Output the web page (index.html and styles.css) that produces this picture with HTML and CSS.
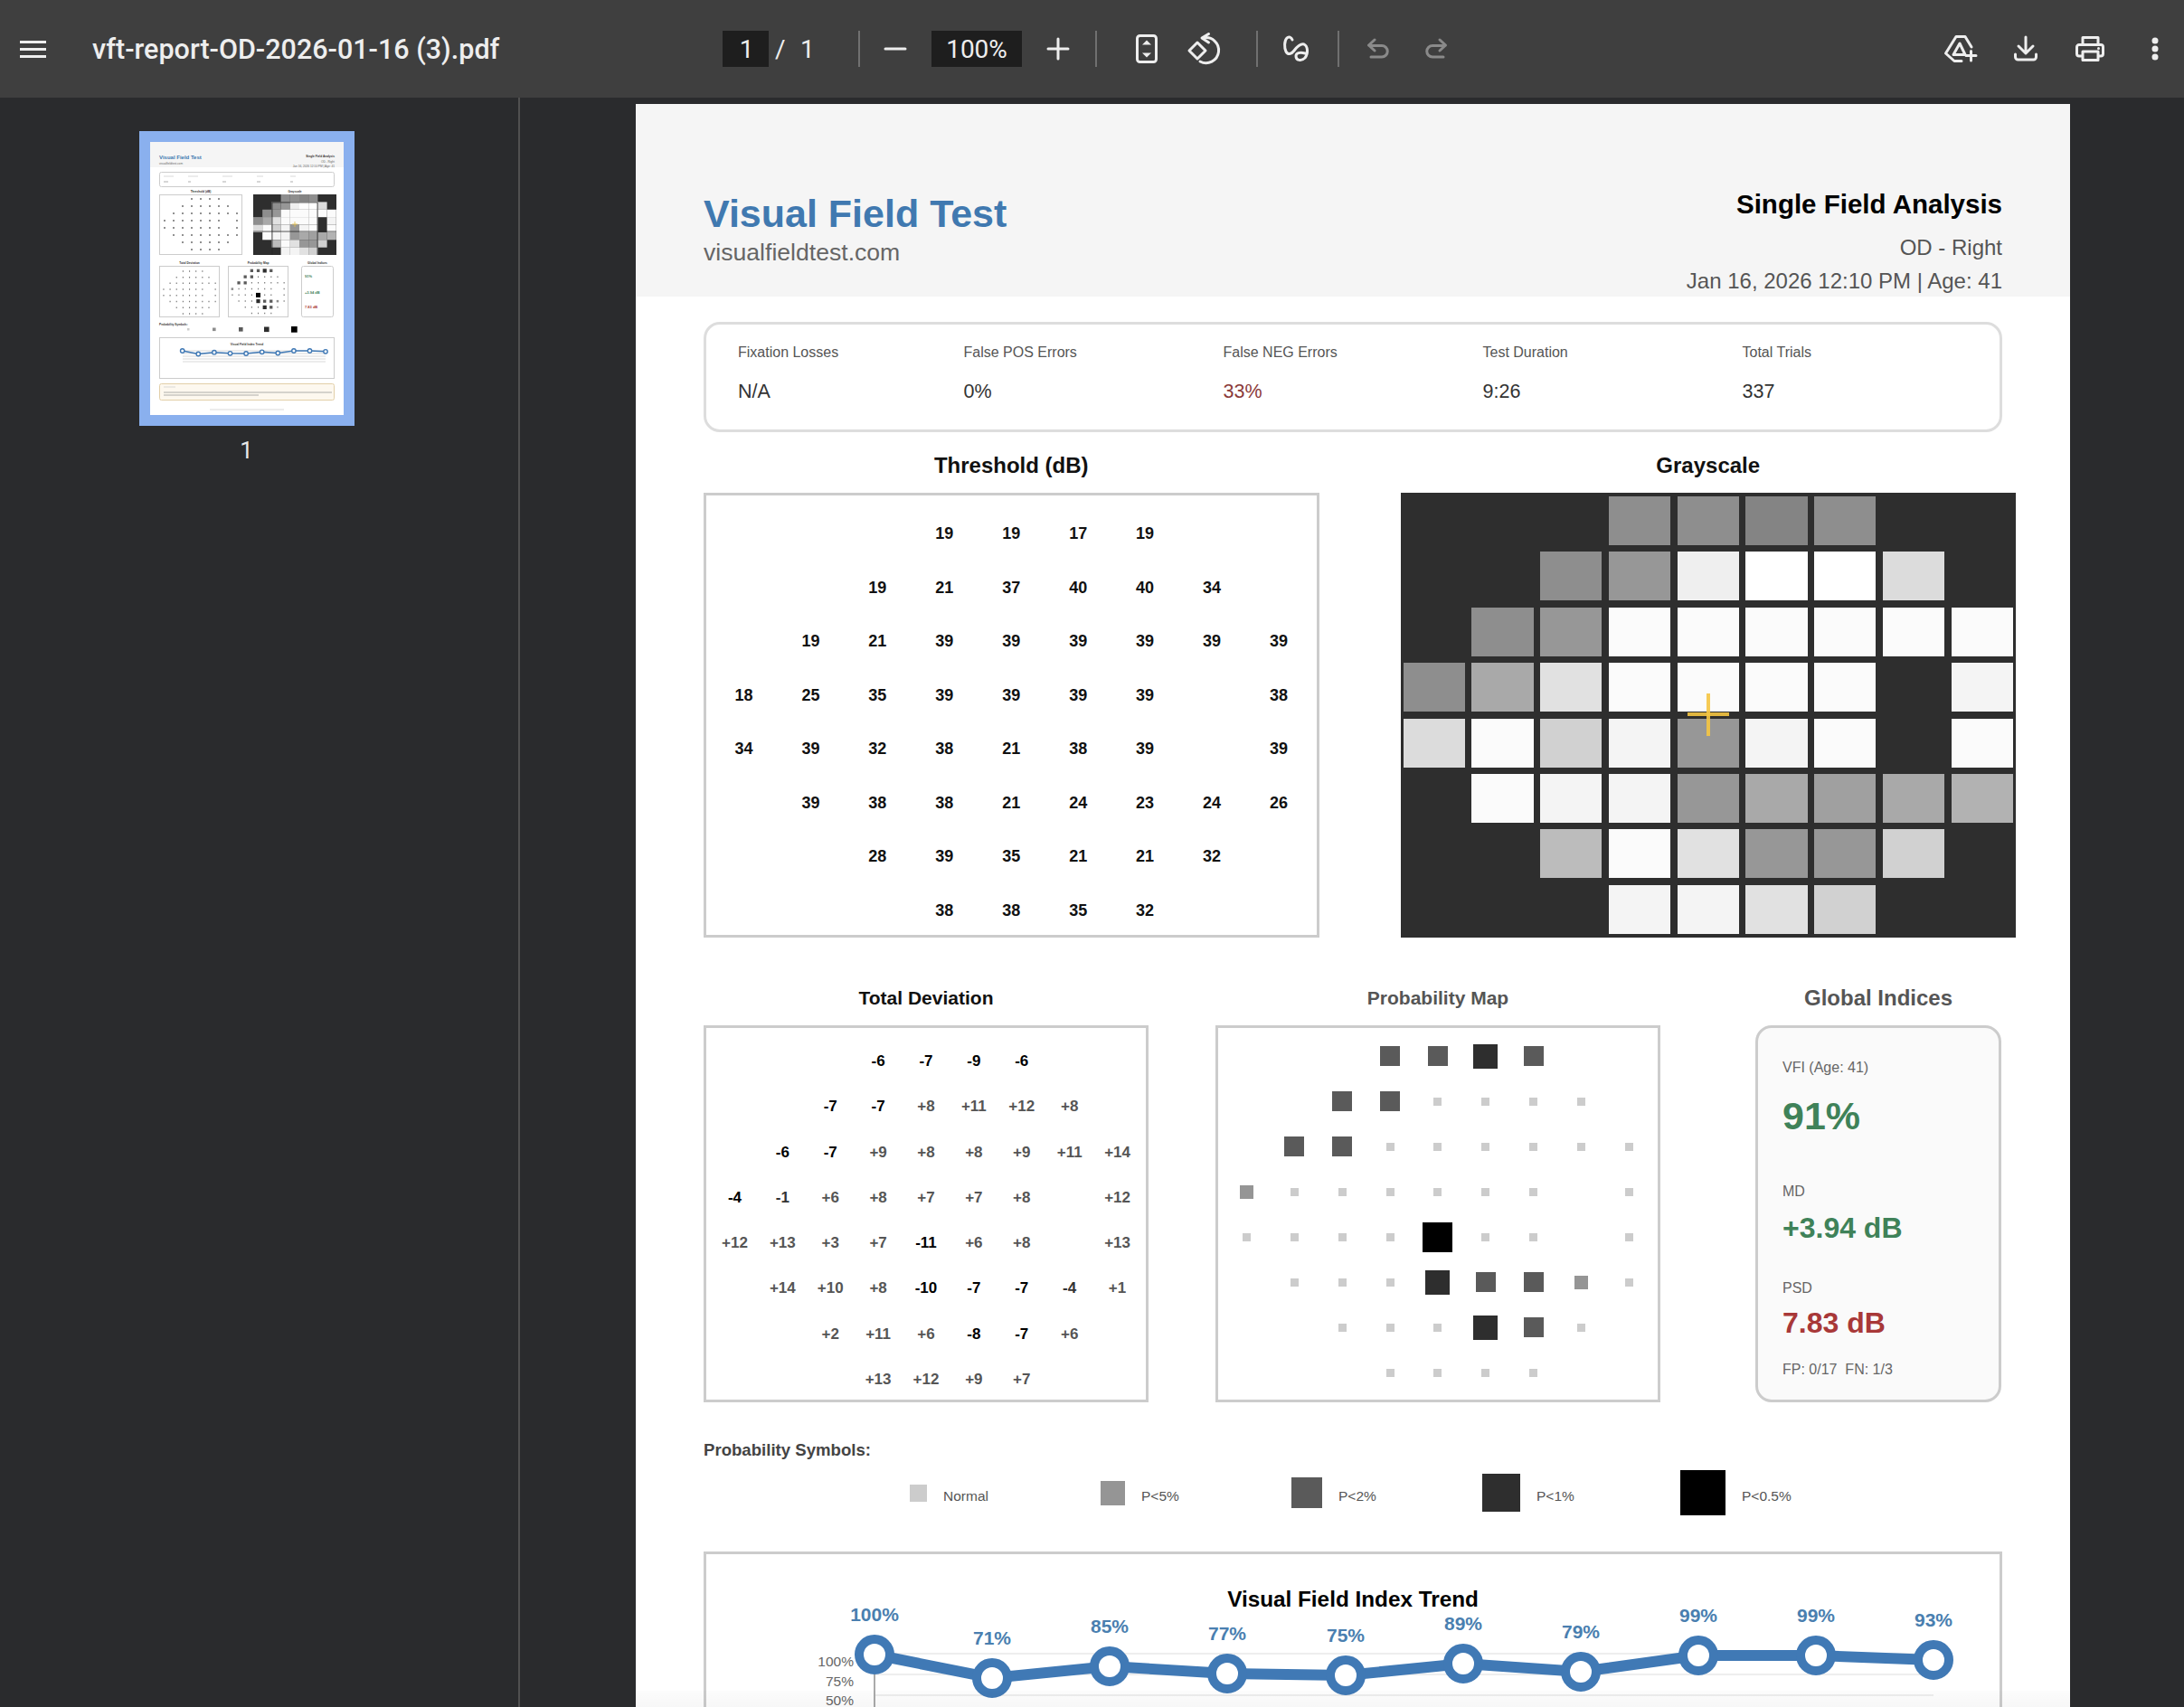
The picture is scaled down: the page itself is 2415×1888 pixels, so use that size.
FILE: index.html
```html
<!DOCTYPE html>
<html lang="en">
<head>
    <meta charset="UTF-8">
    <meta name="viewport" content="width=device-width, initial-scale=1.0">
    <title>vft-report-OD-2026-01-16 (3).pdf</title>
    <link rel="stylesheet" href="styles.css">
</head>
<body>
    <header class="toolbar">
        <svg class="icon ic-menu" width="29" height="19" viewBox="0 0 29 19"><path d="M0 1.5H29M0 9.5H29M0 17.5H29"/></svg>
        <div class="filename">vft-report-OD-2026-01-16 (3).pdf</div>

        <div class="num-box page-box">1</div>
        <span class="slash">/</span>
        <span class="total">1</span>
        <div class="sep sep-a"></div>
        <svg class="icon ic-minus" width="24" height="24" viewBox="0 0 24 24"><path d="M1 12H23"/></svg>
        <div class="num-box zoom-box">100%</div>
        <svg class="icon ic-plus" width="24" height="24" viewBox="0 0 24 24"><path d="M1 12H23M12 1V23"/></svg>
        <div class="sep sep-b"></div>
        <svg class="icon ic-fit" width="24" height="32" viewBox="0 0 24 32"><rect x="1.5" y="1.5" width="21" height="29" rx="3"/><path class="solid" d="M7 11.5H17L12 6.5ZM7 20.5H17L12 25.5Z"/></svg>
        <svg class="icon ic-rotate" width="36" height="34" viewBox="0 0 36 34"><path d="M10 10L19 19L10 28L1 19Z"/><path d="M16.5 5A14 14 0 1 1 13 31M22.5 0.5L15 5L22.5 10"/></svg>
        <div class="sep sep-c"></div>
        <svg class="icon ic-draw" width="30" height="28" viewBox="0 0 30 28"><path d="M10 4C9 1 6 0 4 2C1 5 1 13 3 17C5 21 9 20 12 16C15 12 19 8 23 9C27 11 28 19 24 24C20 28 14 27 14 22C14 19 18 17 24 19"/></svg>
        <div class="sep sep-d"></div>
        <svg class="icon off ic-undo" width="24" height="22" viewBox="0 0 24 22"><path d="M8 1L1.5 7L8 13M2 7.5H16A6 6 0 0 1 16 20H4"/></svg>
        <svg class="icon off ic-redo" width="24" height="22" viewBox="0 0 24 22"><path d="M16 1L22.5 7L16 13M22 7.5H8A6 6 0 0 0 8 20H20"/></svg>

        <svg class="icon ic-drive" width="36" height="30" viewBox="0 0 36 30"><path d="M19 28.5H11L1.5 20L13 1.5H23L30 13M17 9L10 21.5H23Z"/><path d="M29.5 17.5V28M24 22.5H35"/></svg>
        <svg class="icon ic-download" width="26" height="28" viewBox="0 0 26 28"><path d="M13 1V18M5 11L13 19L21 11M1.5 20V23A3 3 0 0 0 4.5 26H21.5A3 3 0 0 0 24.5 23V20"/></svg>
        <svg class="icon ic-print" width="32" height="28" viewBox="0 0 32 28"><path d="M8 9V1.5H25V9M8 22H4A2.5 2.5 0 0 1 1.5 19.5V12A2.5 2.5 0 0 1 4 9.5H28A2.5 2.5 0 0 1 30.5 12V19.5A2.5 2.5 0 0 1 28 22H25M8 17H25V26.5H8Z"/><circle class="solid" cx="25.5" cy="13.5" r="1.5"/></svg>
        <svg class="icon ic-more" width="8" height="26" viewBox="0 0 8 26"><circle class="solid" cx="4" cy="4" r="3.5"/><circle class="solid" cx="4" cy="13" r="3.5"/><circle class="solid" cx="4" cy="22" r="3.5"/></svg>
    </header>

    <div class="main">
        <aside class="sidebar">
            <div class="thumb">
                <svg class="thumb-page" width="214" height="302" viewBox="0 0 214 302">
                    <rect class="t-head" width="214" height="28"/>
                    <text class="t-title" x="10" y="19">Visual Field Test</text>
                    <text class="t-small" x="10" y="24.5">visualfieldtest.com</text>
                    <text class="t-bold end" x="204" y="17">Single Field Analysis</text>
                    <text class="t-small end" x="204" y="22.5">OD - Right</text>
                    <text class="t-small end" x="204" y="27.5">Jan 16, 2026 12:10 PM | Age: 41</text>

                    <rect class="t-box round" x="10.5" y="33.5" width="193" height="16" rx="2"/>
                    <path class="t-faint" d="M15 38H26M42 38H53M80 38H91M118 38H125M155 38H161"/>
                    <path class="t-mid" d="M15 44H20M42 44H45M80 44H84M118 44H122M155 44H158"/>

                    <text class="t-bold mid" x="56" y="55.5">Threshold (dB)</text>
                    <text class="t-bold mid" x="160" y="55.5">Grayscale</text>
                    <rect class="t-box" x="10.5" y="58.5" width="91" height="66"/>
                    <g id="thumb-dots" class="t-dots">
                        <path d="M45.2 63H76.8M35.2 71H86.8M25.2 79H96.8M15.2 87H76.8M95.2 87H96.8M15.2 95H76.8M95.2 95H96.8M25.2 103H96.8M35.2 111H86.8M45.2 119H76.8"/>
                    </g>

                    <rect class="g2e" x="114" y="58" width="92" height="67"/>
                    <g class="t-cells">
                        <rect class="g8e" x="144.6" y="58"/><rect class="g8e" x="154.8" y="58"/><rect class="g84" x="165" y="58"/><rect class="g8e" x="175.2" y="58"/>
                        <rect class="g8e" x="134.4" y="66.4"/><rect class="g97" x="144.6" y="66.4"/><rect class="gef" x="154.8" y="66.4"/><rect class="gff" x="165" y="66.4"/><rect class="gff" x="175.2" y="66.4"/><rect class="gdc" x="185.4" y="66.4"/>
                        <rect class="g8e" x="124.2" y="74.8"/><rect class="g97" x="134.4" y="74.8"/><rect class="gfb" x="144.6" y="74.8"/><rect class="gfb" x="154.8" y="74.8"/><rect class="gfb" x="165" y="74.8"/><rect class="gfb" x="175.2" y="74.8"/><rect class="gfb" x="185.4" y="74.8"/><rect class="gfb" x="195.6" y="74.8"/>
                        <rect class="g8e" x="114" y="83.1"/><rect class="ga9" x="124.2" y="83.1"/><rect class="ge1" x="134.4" y="83.1"/><rect class="gfb" x="144.6" y="83.1"/><rect class="gfb" x="154.8" y="83.1"/><rect class="gfb" x="165" y="83.1"/><rect class="gfb" x="175.2" y="83.1"/><rect class="gf4" x="195.6" y="83.1"/>
                        <rect class="gdc" x="114" y="91.5"/><rect class="gfb" x="124.2" y="91.5"/><rect class="gd1" x="134.4" y="91.5"/><rect class="gf4" x="144.6" y="91.5"/><rect class="g97" x="154.8" y="91.5"/><rect class="gf4" x="165" y="91.5"/><rect class="gfb" x="175.2" y="91.5"/><rect class="gfb" x="195.6" y="91.5"/>
                        <rect class="gfb" x="124.2" y="99.9"/><rect class="gf4" x="134.4" y="99.9"/><rect class="gf4" x="144.6" y="99.9"/><rect class="g97" x="154.8" y="99.9"/><rect class="ga9" x="165" y="99.9"/><rect class="ga0" x="175.2" y="99.9"/><rect class="ga9" x="185.4" y="99.9"/><rect class="gb2" x="195.6" y="99.9"/>
                        <rect class="gbc" x="134.4" y="108.3"/><rect class="gfb" x="144.6" y="108.3"/><rect class="ge1" x="154.8" y="108.3"/><rect class="g97" x="165" y="108.3"/><rect class="g97" x="175.2" y="108.3"/><rect class="gd1" x="185.4" y="108.3"/>
                        <rect class="gf4" x="144.6" y="116.6"/><rect class="gf4" x="154.8" y="116.6"/><rect class="ge1" x="165" y="116.6"/><rect class="gd1" x="175.2" y="116.6"/>
                    </g>
                    <path class="t-seam" d="M135 67H185M114 99H206M135 67V125M185 67V125"/>
                    <path class="t-cross" d="M157 91H163M160 88V94"/>

                    <text class="t-bold mid" x="43.5" y="134.5">Total Deviation</text>
                    <text class="t-bold mid" x="119.5" y="134.5">Probability Map</text>
                    <text class="t-bold mid" x="185" y="134.5">Global Indices</text>
                    <rect class="t-box" x="10.5" y="137.5" width="66" height="56"/>
                    <rect class="t-box" x="86.5" y="137.5" width="66" height="56"/>
                    <rect class="t-box round" x="167.5" y="137.5" width="35" height="56" rx="2"/>
                    <use href="#thumb-dots" transform="translate(3.5 90) scale(.715 .84)"/>
                    <use href="#thumb-dots" transform="translate(79.5 89.5) scale(.715 .84)"/>
                    <g class="t-syms">
                        <rect class="g5a" x="110.7" y="140.7" width="3.3" height="3.3"/><rect class="g5a" x="117.9" y="140.7" width="3.3" height="3.3"/><rect class="g2e" x="124.6" y="140.3" width="4.2" height="4.2"/><rect class="g5a" x="132.1" y="140.7" width="3.3" height="3.3"/>
                        <rect class="g5a" x="103.5" y="147.5" width="3.3" height="3.3"/><rect class="g5a" x="110.7" y="147.5" width="3.3" height="3.3"/>
                        <rect class="g5a" x="96.4" y="154.2" width="3.3" height="3.3"/><rect class="g5a" x="103.5" y="154.2" width="3.3" height="3.3"/>
                        <rect class="g8e" x="89.6" y="161.4" width="2.5" height="2.5"/>
                        <rect class="g00" x="117" y="166.9" width="5" height="5"/>
                        <rect class="g2e" x="117.4" y="174" width="4.2" height="4.2"/><rect class="g5a" x="125" y="174.5" width="3.3" height="3.3"/><rect class="g5a" x="132.1" y="174.5" width="3.3" height="3.3"/><rect class="g8e" x="139.7" y="174.9" width="2.5" height="2.5"/>
                        <rect class="g2e" x="124.6" y="180.8" width="4.2" height="4.2"/><rect class="g5a" x="132.1" y="181.2" width="3.3" height="3.3"/>
                    </g>
                    <text class="t-teal" x="171" y="150">91%</text>
                    <text class="t-teal" x="171" y="168">+3.94 dB</text>
                    <text class="t-red" x="171" y="184">7.83 dB</text>

                    <text class="t-bold" x="10" y="202.5">Probability Symbols:</text>
                    <rect class="gcc" x="41" y="206" width="2.5" height="2.5"/>
                    <rect class="g8e" x="69" y="205.5" width="3.6" height="3.6"/>
                    <rect class="g5a" x="98" y="205" width="4.6" height="4.6"/>
                    <rect class="g2e" x="126" y="204.5" width="5.6" height="5.6"/>
                    <rect class="g00" x="156" y="204" width="6.7" height="6.7"/>

                    <rect class="t-box" x="10.5" y="216.5" width="193" height="45"/>
                    <text class="t-bold mid" x="107" y="225">Visual Field Index Trend</text>
                    <path class="t-faint" d="M36 231H194M36 234H194M36 237H194M36 240H194M36 243H194"/>
                    <path class="t-blue" d="M35.7 231L53.3 234.5L70.9 232.7L88.5 233.8L106.1 234L123.7 232.3L141.3 233.5L158.9 231L176.5 231L194 231.8"/>
                    <g class="t-rings">
                        <circle cx="35.7" cy="231" r="2.2"/><circle cx="53.3" cy="234.5" r="2.2"/><circle cx="70.9" cy="232.7" r="2.2"/><circle cx="88.5" cy="233.8" r="2.2"/><circle cx="106.1" cy="234" r="2.2"/><circle cx="123.7" cy="232.3" r="2.2"/><circle cx="141.3" cy="233.5" r="2.2"/><circle cx="158.9" cy="231" r="2.2"/><circle cx="176.5" cy="231" r="2.2"/><circle cx="194" cy="231.8" r="2.2"/>
                    </g>

                    <rect class="t-note" x="10.5" y="267.5" width="193" height="18" rx="2"/>
                    <path class="t-faint" d="M15 271H28"/>
                    <path class="t-mid" d="M15 277H201M15 280H120"/>
                    <path class="t-faint" d="M66 296H148"/>
                </svg>
            </div>
            <div class="thumb-num">1</div>
        </aside>

        <main class="viewer">
            <div class="page">
                <div class="report-head">
                    <div class="brand">
                        <h1>Visual Field Test</h1>
                        <div class="domain">visualfieldtest.com</div>
                    </div>
                    <div class="meta">
                        <h2>Single Field Analysis</h2>
                        <div class="eye">OD - Right</div>
                        <div class="date">Jan 16, 2026 12:10 PM | Age: 41</div>
                    </div>
                </div>

                <div class="report-body">
                    <div class="stats">
                        <div><div class="stat-label">Fixation Losses</div><div class="stat-value">N/A</div></div>
                        <div><div class="stat-label">False POS Errors</div><div class="stat-value">0%</div></div>
                        <div><div class="stat-label">False NEG Errors</div><div class="stat-value bad">33%</div></div>
                        <div><div class="stat-label">Test Duration</div><div class="stat-value">9:26</div></div>
                        <div><div class="stat-label">Total Trials</div><div class="stat-value">337</div></div>
                    </div>

                    <div class="row-top">
                        <section class="col">
                            <h3 class="sec-title">Threshold (dB)</h3>
                            <div class="plot threshold">
                                <span></span><span></span><span></span><span>19</span><span>19</span><span>17</span><span>19</span><span></span><span></span>
                                <span></span><span></span><span>19</span><span>21</span><span>37</span><span>40</span><span>40</span><span>34</span><span></span>
                                <span></span><span>19</span><span>21</span><span>39</span><span>39</span><span>39</span><span>39</span><span>39</span><span>39</span>
                                <span>18</span><span>25</span><span>35</span><span>39</span><span>39</span><span>39</span><span>39</span><span></span><span>38</span>
                                <span>34</span><span>39</span><span>32</span><span>38</span><span>21</span><span>38</span><span>39</span><span></span><span>39</span>
                                <span></span><span>39</span><span>38</span><span>38</span><span>21</span><span>24</span><span>23</span><span>24</span><span>26</span>
                                <span></span><span></span><span>28</span><span>39</span><span>35</span><span>21</span><span>21</span><span>32</span><span></span>
                                <span></span><span></span><span></span><span>38</span><span>38</span><span>35</span><span>32</span><span></span><span></span>
                            </div>
                        </section>
                        <section class="col">
                            <h3 class="sec-title">Grayscale</h3>
                            <div class="grayscale">
                                <i></i><i></i><i></i><i class="g8e"></i><i class="g8e"></i><i class="g84"></i><i class="g8e"></i><i></i><i></i>
                                <i></i><i></i><i class="g8e"></i><i class="g97"></i><i class="gef"></i><i class="gff"></i><i class="gff"></i><i class="gdc"></i><i></i>
                                <i></i><i class="g8e"></i><i class="g97"></i><i class="gfb"></i><i class="gfb"></i><i class="gfb"></i><i class="gfb"></i><i class="gfb"></i><i class="gfb"></i>
                                <i class="g8e"></i><i class="ga9"></i><i class="ge1"></i><i class="gfb"></i><i class="gfb"></i><i class="gfb"></i><i class="gfb"></i><i></i><i class="gf4"></i>
                                <i class="gdc"></i><i class="gfb"></i><i class="gd1"></i><i class="gf4"></i><i class="g97"></i><i class="gf4"></i><i class="gfb"></i><i></i><i class="gfb"></i>
                                <i></i><i class="gfb"></i><i class="gf4"></i><i class="gf4"></i><i class="g97"></i><i class="ga9"></i><i class="ga0"></i><i class="ga9"></i><i class="gb2"></i>
                                <i></i><i></i><i class="gbc"></i><i class="gfb"></i><i class="ge1"></i><i class="g97"></i><i class="g97"></i><i class="gd1"></i><i></i>
                                <i></i><i></i><i></i><i class="gf4"></i><i class="gf4"></i><i class="ge1"></i><i class="gd1"></i><i></i><i></i>
                                <div class="fix-h"></div>
                                <div class="fix-v"></div>
                            </div>
                        </section>
                    </div>

                    <div class="row-mid">
                        <section class="col-dev">
                            <h3 class="sec-title small">Total Deviation</h3>
                            <div class="plot deviation">
                                <span></span><span></span><span></span><span class="neg">-6</span><span class="neg">-7</span><span class="neg">-9</span><span class="neg">-6</span><span></span><span></span>
                                <span></span><span></span><span class="neg">-7</span><span class="neg">-7</span><span>+8</span><span>+11</span><span>+12</span><span>+8</span><span></span>
                                <span></span><span class="neg">-6</span><span class="neg">-7</span><span>+9</span><span>+8</span><span>+8</span><span>+9</span><span>+11</span><span>+14</span>
                                <span class="neg">-4</span><span class="mild">-1</span><span>+6</span><span>+8</span><span>+7</span><span>+7</span><span>+8</span><span></span><span>+12</span>
                                <span>+12</span><span>+13</span><span>+3</span><span>+7</span><span class="neg">-11</span><span>+6</span><span>+8</span><span></span><span>+13</span>
                                <span></span><span>+14</span><span>+10</span><span>+8</span><span class="neg">-10</span><span class="neg">-7</span><span class="neg">-7</span><span class="mild">-4</span><span>+1</span>
                                <span></span><span></span><span>+2</span><span>+11</span><span>+6</span><span class="neg">-8</span><span class="neg">-7</span><span>+6</span><span></span>
                                <span></span><span></span><span></span><span>+13</span><span>+12</span><span>+9</span><span>+7</span><span></span><span></span>
                            </div>
                        </section>
                        <section class="col-dev">
                            <h3 class="sec-title small soft">Probability Map</h3>
                            <div class="plot probmap">
                                <span></span><span></span><span></span><span><i class="sym p2"></i></span><span><i class="sym p2"></i></span><span><i class="sym p1"></i></span><span><i class="sym p2"></i></span><span></span><span></span>
                                <span></span><span></span><span><i class="sym p2"></i></span><span><i class="sym p2"></i></span><span><i class="sym pn"></i></span><span><i class="sym pn"></i></span><span><i class="sym pn"></i></span><span><i class="sym pn"></i></span><span></span>
                                <span></span><span><i class="sym p2"></i></span><span><i class="sym p2"></i></span><span><i class="sym pn"></i></span><span><i class="sym pn"></i></span><span><i class="sym pn"></i></span><span><i class="sym pn"></i></span><span><i class="sym pn"></i></span><span><i class="sym pn"></i></span>
                                <span><i class="sym p5"></i></span><span><i class="sym pn"></i></span><span><i class="sym pn"></i></span><span><i class="sym pn"></i></span><span><i class="sym pn"></i></span><span><i class="sym pn"></i></span><span><i class="sym pn"></i></span><span></span><span><i class="sym pn"></i></span>
                                <span><i class="sym pn"></i></span><span><i class="sym pn"></i></span><span><i class="sym pn"></i></span><span><i class="sym pn"></i></span><span><i class="sym p05"></i></span><span><i class="sym pn"></i></span><span><i class="sym pn"></i></span><span></span><span><i class="sym pn"></i></span>
                                <span></span><span><i class="sym pn"></i></span><span><i class="sym pn"></i></span><span><i class="sym pn"></i></span><span><i class="sym p1"></i></span><span><i class="sym p2"></i></span><span><i class="sym p2"></i></span><span><i class="sym p5"></i></span><span><i class="sym pn"></i></span>
                                <span></span><span></span><span><i class="sym pn"></i></span><span><i class="sym pn"></i></span><span><i class="sym pn"></i></span><span><i class="sym p1"></i></span><span><i class="sym p2"></i></span><span><i class="sym pn"></i></span><span></span>
                                <span></span><span></span><span></span><span><i class="sym pn"></i></span><span><i class="sym pn"></i></span><span><i class="sym pn"></i></span><span><i class="sym pn"></i></span><span></span><span></span>
                            </div>
                        </section>
                        <section class="col-global">
                            <h3 class="sec-title soft">Global Indices</h3>
                            <div class="indices">
                                <div class="idx-label">VFI (Age: 41)</div>
                                <div class="idx-big good">91%</div>
                                <div class="idx-label md">MD</div>
                                <div class="idx-val good">+3.94 dB</div>
                                <div class="idx-label psd">PSD</div>
                                <div class="idx-val red">7.83 dB</div>
                                <div class="idx-label fp">FP: 0/17&nbsp; FN: 1/3</div>
                            </div>
                        </section>
                    </div>

                    <div class="legend-title">Probability Symbols:</div>
                    <div class="legend">
                        <div class="legend-item"><i class="sw sw-n"></i><span>Normal</span></div>
                        <div class="legend-item"><i class="sw sw-5"></i><span>P&lt;5%</span></div>
                        <div class="legend-item"><i class="sw sw-2"></i><span>P&lt;2%</span></div>
                        <div class="legend-item wide"><i class="sw sw-1"></i><span>P&lt;1%</span></div>
                        <div class="legend-item"><i class="sw sw-05"></i><span>P&lt;0.5%</span></div>
                    </div>

                    <div class="trend">
                        <svg class="trend-chart" width="1429" height="400" viewBox="0 0 1429 400">
                            <text class="trend-title" x="715" y="58">Visual Field Index Trend</text>
                            <path class="grid-line" d="M186 110H1357M186 133H1357M186 156H1357"/>
                            <path class="axis-line" d="M186 111V400"/>
                            <text class="tick" x="163" y="124">100%</text>
                            <text class="tick" x="163" y="146">75%</text>
                            <text class="tick" x="163" y="167">50%</text>
                            <polyline class="trend-line" points="186,111 316,137 446,124 576,132 707,134 837,121 967,130 1097,112 1227,112 1357,117"/>
                            <g class="trend-dots">
                                <circle cx="186" cy="111" r="17"/><circle cx="316" cy="137" r="17"/><circle cx="446" cy="124" r="17"/><circle cx="576" cy="132" r="17"/><circle cx="707" cy="134" r="17"/><circle cx="837" cy="121" r="17"/><circle cx="967" cy="130" r="17"/><circle cx="1097" cy="112" r="17"/><circle cx="1227" cy="112" r="17"/><circle cx="1357" cy="117" r="17"/>
                            </g>
                            <g class="trend-vals">
                                <text x="186" y="74">100%</text><text x="316" y="100">71%</text><text x="446" y="87">85%</text><text x="576" y="95">77%</text><text x="707" y="97">75%</text><text x="837" y="84">89%</text><text x="967" y="93">79%</text><text x="1097" y="75">99%</text><text x="1227" y="75">99%</text><text x="1357" y="80">93%</text>
                            </g>
                        </svg>
                    </div>
                </div>
            </div>
            <div class="page-fade"></div>
        </main>
    </div>
</body>
</html>
```

FILE: styles.css
```css
* {
    box-sizing: border-box;
}

html, body {
    height: 100%;
}

body {
    margin: 0;
    display: flex;
    flex-direction: column;
    overflow: hidden;
    font-family: "Liberation Sans", Arial, sans-serif;
    background: #2a2b2d;
}

/* top bar of the pdf viewer */
.toolbar {
    flex: 0 0 108px;
    display: flex;
    align-items: center;
    padding: 0 28px 0 22px;
    background: #3f3f3f;
    color: #eeeeee;
    font-family: Roboto, "Liberation Sans", sans-serif;
}

.icon {
    flex: none;
    overflow: visible;
    fill: none;
    stroke: #eeeeee;
    stroke-width: 3;
    stroke-linecap: round;
    stroke-linejoin: round;
}

.icon .solid {
    fill: #eeeeee;
    stroke: none;
}

.icon.off {
    stroke: #8a8a8a;
}

.ic-menu { stroke-linecap: butt; }

.filename {
    flex: 0 0 697px;
    margin-left: 51px;
    font-size: 30.5px;
    font-weight: 500;
    white-space: nowrap;
}

.num-box {
    height: 40px;
    display: flex;
    align-items: center;
    justify-content: center;
    background: #1e1e1e;
    font-size: 28px;
}

.page-box { width: 51px; padding-left: 2px; }
.zoom-box { width: 100px; margin-left: 28px; }

.slash { margin-left: 7px; width: 8px; font-size: 28px; }
.total { margin-left: 20px; width: 12px; font-size: 28px; }

.sep {
    flex: none;
    width: 2px;
    height: 40px;
    background: #707070;
}

.sep-a { margin-left: 52px; }
.sep-b { margin-left: 29px; }
.sep-c { margin-left: 39px; }
.sep-d { margin-left: 30px; }

.ic-minus { margin-left: 27px; }
.ic-plus { margin-left: 28px; }
.ic-fit { margin-left: 43px; }
.ic-rotate { margin-left: 34px; }
.ic-draw { margin-left: 28px; }
.ic-undo { margin-left: 31px; }
.ic-redo { margin-left: 40px; }
.ic-drive { margin-left: auto; }
.ic-download { margin-left: 41px; }
.ic-print { margin-left: 42px; }
.ic-more { margin-left: 52px; }

.main {
    flex: 1;
    min-height: 0;
    display: flex;
}

/* thumbnails */
.sidebar {
    flex: 0 0 575px;
    display: flex;
    flex-direction: column;
    align-items: center;
    padding: 37px 28px 0 0;
    border-right: 2px solid #505050;
}

.thumb {
    padding: 12px;
    background: #8ab0ee;
}

.thumb-page {
    display: block;
    background: #ffffff;
}

.thumb-num {
    margin-top: 12px;
    font-family: Roboto, sans-serif;
    font-size: 26px;
    line-height: 30px;
    color: #e8e8e8;
}

.t-head { fill: #f5f5f5; }
.t-title { font-size: 6px; font-weight: bold; fill: #4079b0; }
.t-small { font-size: 3.2px; fill: #666666; }
.t-bold { font-size: 3.2px; font-weight: bold; fill: #333333; }
.t-teal { font-size: 4px; font-weight: bold; fill: #3f8259; }
.t-red { font-size: 4px; font-weight: bold; fill: #a83838; }
.end { text-anchor: end; }
.mid { text-anchor: middle; }
.t-box { fill: #ffffff; stroke: #cccccc; stroke-width: 1; }
.t-faint { fill: none; stroke: #cfcfcf; stroke-width: .8; }
.t-mid { fill: none; stroke: #999999; stroke-width: .8; }
.t-dots path {
    fill: none;
    stroke: #777777;
    stroke-width: 1.8;
    stroke-dasharray: 1.6 8.4;
}
.t-cells rect { width: 10.2px; height: 8.4px; }
.t-seam { fill: none; stroke: #222222; stroke-width: .7; }
.t-cross { fill: none; stroke: #e6c04a; stroke-width: .8; }
.t-blue { fill: none; stroke: #4079b5; stroke-width: 1.4; }
.t-rings circle { fill: #ffffff; stroke: #4079b5; stroke-width: 1.4; }
.t-note { fill: #fdf8ef; stroke: #e2cfa8; stroke-width: 1; }

/* shades shared by the grayscale plot and its thumbnail */
.g00 { background: #000000; fill: #000000; }
.g2e { background: #2e2e2e; fill: #2e2e2e; }
.g5a { background: #5a5a5a; fill: #5a5a5a; }
.g84 { background: #848484; fill: #848484; }
.g8e { background: #8e8e8e; fill: #8e8e8e; }
.g97 { background: #979797; fill: #979797; }
.ga0 { background: #a0a0a0; fill: #a0a0a0; }
.ga9 { background: #a9a9a9; fill: #a9a9a9; }
.gb2 { background: #b2b2b2; fill: #b2b2b2; }
.gbc { background: #bcbcbc; fill: #bcbcbc; }
.gcc { background: #cccccc; fill: #cccccc; }
.gd1 { background: #d1d1d1; fill: #d1d1d1; }
.gdc { background: #dcdcdc; fill: #dcdcdc; }
.ge1 { background: #e1e1e1; fill: #e1e1e1; }
.gef { background: #efefef; fill: #efefef; }
.gf4 { background: #f4f4f4; fill: #f4f4f4; }
.gfb { background: #fbfbfb; fill: #fbfbfb; }
.gff { background: #ffffff; fill: #ffffff; }

/* pdf page */
.viewer {
    flex: 1;
    min-width: 0;
    position: relative;
    overflow: hidden;
    padding-top: 7px;
}

.page {
    width: 1586px;
    margin-left: 128px;
    background: #ffffff;
}

.page-fade {
    position: absolute;
    left: 128px;
    bottom: 0;
    width: 1586px;
    height: 18px;
    background: linear-gradient(rgba(0, 0, 0, 0.01), rgba(0, 0, 0, 0.03));
}

.report-head {
    height: 213px;
    display: flex;
    justify-content: space-between;
    align-items: flex-start;
    padding: 90px 75px 0 75px;
    background: #f5f5f5;
}

.brand { margin-top: 5px; }

.brand h1 {
    margin: 0;
    font-size: 43px;
    line-height: 52px;
    color: #4079b0;
}

.domain {
    font-size: 26.6px;
    line-height: 35px;
    color: #666666;
}

.meta { text-align: right; }

.meta h2 {
    margin: 0;
    font-size: 29.5px;
    line-height: 41px;
    color: #000000;
}

.eye {
    margin-top: 10px;
    font-size: 24px;
    line-height: 36px;
    color: #555555;
}

.date {
    font-size: 24px;
    line-height: 38px;
    color: #555555;
}

.report-body {
    padding: 28px 75px 0 75px;
}

.stats {
    height: 122px;
    display: grid;
    grid-template-columns: 249.5px 287px 287px 287px 1fr;
    padding: 20px 0 0 35px;
    border: 3px solid #dddddd;
    border-radius: 18px;
}

.stat-label {
    font-size: 16px;
    line-height: 22px;
    color: #555555;
}

.stat-value {
    margin-top: 17px;
    font-size: 21.5px;
    line-height: 30px;
    color: #333333;
}

.stat-value.bad { color: #8b3a3a; }

.row-top {
    display: flex;
    gap: 90px;
    margin: 21px -15px 0 0;
}

.col {
    flex: 1;
    min-width: 0;
}

.sec-title {
    margin: 0 0 14px;
    font-size: 24px;
    line-height: 32px;
    text-align: center;
    color: #111111;
}

.sec-title.small { font-size: 21px; }
.sec-title.soft { color: #555555; }

.plot {
    display: grid;
    grid-template-columns: repeat(9, 1fr);
    border: 3px solid #cccccc;
    font-weight: bold;
}

.plot span {
    display: flex;
    align-items: center;
    justify-content: center;
}

.threshold {
    height: 492px;
    grid-auto-rows: 59.5px;
    padding: 13px 4.5px 0;
    font-size: 18px;
    color: #111111;
}

.grayscale {
    position: relative;
    height: 492px;
    display: grid;
    grid-template-columns: repeat(9, 1fr);
    grid-auto-rows: 54px;
    gap: 7.4px;
    padding: 4px 3px;
    background: #2e2e2e;
}

/* fixation cross sits over the cells */
.fix-h, .fix-v {
    position: absolute;
    background: #f5c542;
    opacity: 0.9;
}

.fix-h {
    left: 317px;
    top: 243px;
    width: 46px;
    height: 4px;
}

.fix-v {
    left: 338px;
    top: 222px;
    width: 4px;
    height: 47px;
}

.row-mid {
    display: flex;
    margin-top: 51px;
}

.col-dev {
    flex: 0 0 492px;
    margin-right: 74px;
}

.col-global {
    flex: 0 0 272px;
    margin-left: 31px;
}

.deviation, .probmap {
    height: 417px;
    padding: 12px 5px 0;
}

.deviation {
    grid-auto-rows: 50.25px;
    font-size: 17px;
    color: #555555;
}

.probmap {
    grid-auto-rows: 50px;
    padding-top: 6px;
}

.deviation .neg { color: #000000; }
.deviation .mild { color: #333333; }

.sym { display: block; }
.pn { width: 9px; height: 9px; background: #cccccc; }
.p5 { width: 15px; height: 15px; background: #959595; }
.p2 { width: 22px; height: 22px; background: #5a5a5a; }
.p1 { width: 27px; height: 27px; background: #2e2e2e; }
.p05 { width: 33px; height: 33px; background: #000000; }

.indices {
    height: 417px;
    padding: 33px 0 0 27px;
    border: 3px solid #cccccc;
    border-radius: 18px;
    background: #fafafa;
}

.idx-label {
    font-size: 16px;
    line-height: 22px;
    color: #666666;
}

.idx-label.md { margin-top: 48px; }
.idx-label.psd { margin-top: 36px; }
.idx-label.fp { margin-top: 21px; }

.idx-big {
    margin-top: 17px;
    font-size: 43px;
    font-weight: bold;
    line-height: 50px;
}

.idx-val {
    margin-top: 9px;
    font-size: 32px;
    font-weight: bold;
    line-height: 40px;
}

.idx-val.red { margin-top: 7px; color: #a83838; }
.good { color: #3f8259; }

.legend-title {
    margin-top: 41px;
    font-size: 18.6px;
    font-weight: bold;
    line-height: 24px;
    color: #444444;
}

.legend {
    display: flex;
    height: 50px;
    margin-top: 10px;
    padding-left: 228px;
}

.legend-item {
    flex: 0 0 211px;
    display: flex;
    align-items: center;
    gap: 18px;
    font-size: 15.5px;
    color: #555555;
}

.legend-item.wide { flex-basis: 219px; }
.legend-item span { margin-top: 8px; }

.sw { display: block; flex: none; }
.sw-n { width: 19px; height: 19px; background: #cccccc; }
.sw-5 { width: 27px; height: 27px; background: #959595; }
.sw-2 { width: 34px; height: 34px; background: #5a5a5a; }
.sw-1 { width: 42px; height: 42px; background: #2e2e2e; }
.sw-05 { width: 50px; height: 50px; background: #000000; }

.trend {
    margin-top: 40px;
    border: 3px solid #cccccc;
}

.trend-chart { display: block; }

.trend-title {
    font-size: 24.3px;
    font-weight: bold;
    text-anchor: middle;
    fill: #000000;
}

.grid-line { fill: none; stroke: #eeeeee; stroke-width: 2; }
.axis-line { fill: none; stroke: #aaaaaa; stroke-width: 2; }

.tick {
    font-size: 15.5px;
    text-anchor: end;
    fill: #666666;
}

.trend-line {
    fill: none;
    stroke: #4079b5;
    stroke-width: 12;
}

.trend-dots circle {
    fill: #ffffff;
    stroke: #4079b5;
    stroke-width: 10;
}

.trend-vals text {
    font-size: 21px;
    font-weight: bold;
    text-anchor: middle;
    fill: #4a7fb0;
}
```
